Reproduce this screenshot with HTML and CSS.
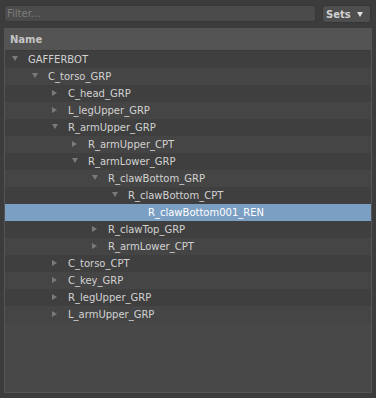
FILE: index.html
```html
<!DOCTYPE html>
<html lang="en">

<head>
    <meta charset="UTF-8">
    <meta name="viewport" content="width=device-width, initial-scale=1.0">
    <title>Hierarchy</title>
    <link rel="stylesheet" href="styles.css">
</head>

<body>
    <div class="toolbar">
        <div class="filter">Filter...</div>
        <div class="sets">Sets <span class="sets-arrow"></span></div>
    </div>
    <div class="panel">
        <div class="header">Name</div>
        <div class="tree">
            <div class="row l0"><span class="toggle open"></span>GAFFERBOT</div>
            <div class="row l1"><span class="toggle open"></span>C_torso_GRP</div>
            <div class="row l2"><span class="toggle closed"></span>C_head_GRP</div>
            <div class="row l2"><span class="toggle closed"></span>L_legUpper_GRP</div>
            <div class="row l2"><span class="toggle open"></span>R_armUpper_GRP</div>
            <div class="row l3"><span class="toggle closed"></span>R_armUpper_CPT</div>
            <div class="row l3"><span class="toggle open"></span>R_armLower_GRP</div>
            <div class="row l4"><span class="toggle open"></span>R_clawBottom_GRP</div>
            <div class="row l5"><span class="toggle open"></span>R_clawBottom_CPT</div>
            <div class="row l6 selected"><span class="toggle"></span>R_clawBottom001_REN</div>
            <div class="row l4"><span class="toggle closed"></span>R_clawTop_GRP</div>
            <div class="row l4"><span class="toggle closed"></span>R_armLower_CPT</div>
            <div class="row l2"><span class="toggle closed"></span>C_torso_CPT</div>
            <div class="row l2"><span class="toggle closed"></span>C_key_GRP</div>
            <div class="row l2"><span class="toggle closed"></span>R_legUpper_GRP</div>
            <div class="row l2"><span class="toggle closed"></span>L_armUpper_GRP</div>
        </div>
    </div>
</body>

</html>
```

FILE: styles.css
```css
body {
    margin: 0;
    padding: 5px 5px 0 4px;
    background-color: #3c3c3c;
    font-family: "DejaVu Sans", sans-serif;
    font-size: 10px;
    color: #d2d2d2;
    height: 398px;
    box-sizing: border-box;
}

.toolbar {
    display: flex;
    gap: 6px;
    height: 18px;
}

.filter {
    flex: 1;
    height: 17px;
    box-sizing: border-box;
    background-color: #4b4b4b;
    border: 1px solid #383838;
    border-radius: 3px;
    color: #7c7c7c;
    padding-left: 2px;
    line-height: 15px;
}

.sets {
    width: 49px;
    box-sizing: border-box;
    background-color: #4e4e4e;
    border: 1px solid #363636;
    border-radius: 3px;
    font-weight: bold;
    color: #d0d0d0;
    display: flex;
    align-items: center;
    padding-left: 3px;
    gap: 6px;
}

.sets-arrow {
    width: 0;
    height: 0;
    border-left: 3.5px solid transparent;
    border-right: 3.5px solid transparent;
    border-top: 5px solid #e0e0e0;
}

.panel {
    margin-top: 5px;
    width: 368px;
    height: 365px;
    box-sizing: border-box;
    background-color: #484848;
    border: 1px solid #555555;
}

.header {
    height: 21px;
    background-color: #545454;
    border-bottom: 1px solid #3a3a3a;
    font-weight: bold;
    color: #c4c4c4;
    padding-left: 5px;
    line-height: 21px;
}

.row {
    height: 17px;
    display: flex;
    align-items: center;
    background-color: #3f3f3f;
}

.row:nth-child(even) {
    background-color: #454545;
}

.row.selected {
    background-color: #7b9ec3;
    color: #ffffff;
}

.toggle {
    width: 16px;
    flex: none;
    display: flex;
    align-items: center;
    height: 17px;
    margin-top: -3px;
}

.toggle.open::before {
    content: "";
    border-left: 3px solid transparent;
    border-right: 3px solid transparent;
    border-top: 5px solid #7a7a7a;
}

.toggle.closed::before {
    content: "";
    margin-top: 2px;
    border-top: 3.5px solid transparent;
    border-bottom: 3.5px solid transparent;
    border-left: 5px solid #7a7a7a;
}

.l0 { padding-left: 7px; }
.l1 { padding-left: 27px; }
.l2 { padding-left: 47px; }
.l3 { padding-left: 67px; }
.l4 { padding-left: 87px; }
.l5 { padding-left: 107px; }
.l6 { padding-left: 127px; }
```
